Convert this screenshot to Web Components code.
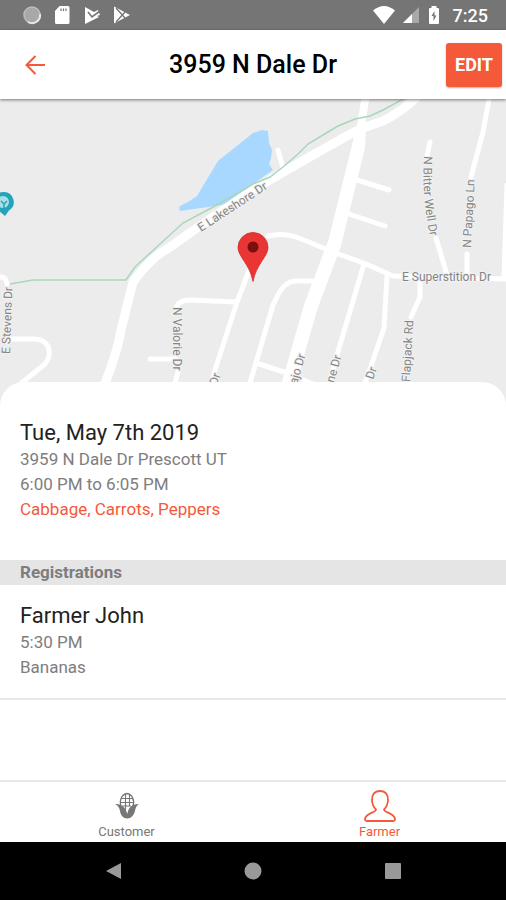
<!DOCTYPE html>
<html lang="en">
<head>
<meta charset="utf-8">
<meta name="viewport" content="width=device-width, initial-scale=1">
<title>3959 N Dale Dr</title>
<style>
  :root {
    --accent: #f4593a;
    --muted: #7d7d7d;
    --line: #e8e8e8;
  }
  html, body { height: 100%; }
  body {
    margin: 0;
    background: #fff;
    color: #222;
    font-family: Roboto, "Liberation Sans", sans-serif;
  }
</style>
</head>
<body>
<market-app>
  <status-bar slot="top" time="7:25"></status-bar>
  <app-header slot="top" action="EDIT">3959 N Dale Dr</app-header>
  <location-map></location-map>
  <market-sheet>
    <info-block>
      <span slot="title">Tue, May 7th 2019</span>
      <span>3959 N Dale Dr Prescott UT</span>
      <span>6:00 PM to 6:05 PM</span>
      <span slot="note">Cabbage, Carrots, Peppers</span>
    </info-block>
    <section-title>Registrations</section-title>
    <info-block divided>
      <span slot="title">Farmer John</span>
      <span>5:30 PM</span>
      <span>Bananas</span>
    </info-block>
  </market-sheet>
  <tab-bar slot="bottom">
    <tab-item icon="corn">Customer</tab-item>
    <tab-item icon="person" active>Farmer</tab-item>
  </tab-bar>
  <system-nav slot="bottom"></system-nav>
</market-app>

<script>
class BaseElement extends HTMLElement {
  constructor() {
    super();
    this.attachShadow({ mode: 'open' });
  }

  connectedCallback() {
    this.shadowRoot.innerHTML = this.template();
  }
}

class MarketApp extends BaseElement {
  template() {
    return `
      <style>
        :host {
          display: flex;
          flex-direction: column;
          min-height: 100vh;
        }
        main { flex: 1; }
      </style>
      <slot name="top"></slot>
      <main><slot></slot></main>
      <slot name="bottom"></slot>
    `;
  }
}

class StatusBar extends BaseElement {
  template() {
    return `
      <style>
        :host {
          display: flex;
          align-items: center;
          justify-content: space-between;
          height: 30px;
          padding: 0 18px 0 22px;
          background: #757575;
          color: #fff;
          font-size: 18px;
          font-weight: 500;
        }
        div { display: flex; align-items: center; }
        .left { gap: 10px; }
        .right { gap: 6px; }
        svg { display: block; }
        time { margin-left: 4px; }
      </style>
      <div class="left">
        <svg width="20" height="20" viewBox="0 0 20 20">
          <circle cx="10" cy="10" r="8" fill="#a8a8a8" stroke="#bcbcbc" stroke-width="1.500"/>
          <path d="M18 9a8 8 0 0 1-12 8" fill="none" stroke="#e6e6e6" stroke-width="2"/>
        </svg>
        <svg width="20" height="20" viewBox="0 0 20 20">
          <path d="M7.500 1H16a1.500 1.500 0 0 1 1.500 1.500v15A1.500 1.500 0 0 1 16 19H4.500A1.500 1.500 0 0 1 3 17.500V6z" fill="#fff"/>
          <path d="M9 3.500v2.500M11.500 3.500v2.500M14 3.500v2.500" stroke="#757575" stroke-width="1.200"/>
        </svg>
        <svg width="20" height="20" viewBox="0 0 20 20">
          <path d="M3 2l9 5 4-2 2 5-3 1 2 1L3 19z" fill="#fff"/>
          <path d="M6 7l4 5 8-6" fill="none" stroke="#757575" stroke-width="1.600"/>
        </svg>
        <svg width="20" height="20" viewBox="0 0 20 20">
          <path d="M2 1.500L18 10 2 18.500z" fill="#fff"/>
          <path d="M4 3l9 10M4 17l9-10" stroke="#757575" stroke-width="1.300"/>
        </svg>
      </div>
      <div class="right">
        <svg width="22" height="20" viewBox="0 0 22 20">
          <path d="M0 5.500Q11-3.500 22 5.500L11 19z" fill="#fff"/>
        </svg>
        <svg width="18" height="20" viewBox="0 0 18 20">
          <path d="M18 2v16H2z" fill="#a9a9a9"/>
          <path d="M11 9v9H2z" fill="#fff"/>
        </svg>
        <svg width="18" height="20" viewBox="0 0 18 20">
          <path d="M6.500 1h5v2H13a1 1 0 0 1 1 1v14a1 1 0 0 1-1 1H5a1 1 0 0 1-1-1V4a1 1 0 0 1 1-1h1.500z" fill="#fff"/>
          <path d="M9.500 6L6.500 11h2v5l3-5.500h-2z" fill="#757575"/>
        </svg>
        <time>${this.getAttribute('time')}</time>
      </div>
    `;
  }
}

class AppHeader extends BaseElement {
  template() {
    return `
      <style>
        :host {
          position: relative;
          z-index: 1;
          display: grid;
          grid-template-columns: 70px 1fr 70px;
          align-items: center;
          height: 69px;
          background: #fff;
          box-shadow: 0 1px 3px rgba(0, 0, 0, .5);
        }
        h1 {
          margin: 0;
          color: #000;
          font-size: 25px;
          font-weight: 500;
          line-height: 32px;
          text-align: center;
        }
        button {
          border: 0;
          padding: 0;
          font: inherit;
          cursor: pointer;
        }
        .back {
          justify-self: center;
          background: none;
          color: var(--accent);
        }
        .back svg { display: block; }
        .edit {
          justify-self: end;
          width: 56px;
          height: 44px;
          margin-right: 4px;
          border-radius: 3px;
          background: var(--accent);
          box-shadow: 0 1px 2px rgba(0, 0, 0, .3);
          color: #fff;
          font-size: 18px;
          font-weight: 700;
        }
      </style>
      <button class="back" aria-label="Back">
        <svg width="20" height="20" viewBox="0 0 20 20" fill="none" stroke="currentColor" stroke-width="2">
          <path d="M20 10H2M10.500 1L1.500 10l9 9"/>
        </svg>
      </button>
      <h1><slot></slot></h1>
      <button class="edit">${this.getAttribute('action')}</button>
    `;
  }
}

class LocationMap extends BaseElement {
  template() {
    return `
      <style>
        :host {
          display: block;
          height: 307px;
          background: #ececec;
        }
        svg { display: block; width: 100%; height: 100%; }
        .road { fill: none; stroke: #fff; stroke-linejoin: round; stroke-linecap: round; }
        text {
          font-size: 12px;
          fill: #858585;
          stroke: #f2f2f2;
          stroke-width: 2;
          paint-order: stroke;
        }
      </style>
      <svg viewBox="0 99 506 307" preserveAspectRatio="xMidYMid slice" role="img" aria-label="Map of 3959 N Dale Dr">
        <!-- lake -->
        <path d="M179 207Q181 205 188 202L197 196 218 161 253 133 262 130 268 131 269 143 272 150 271 158 269 164 273 170 253 184 235 200 222 205 180 211z" fill="#a8d8ff"/>

        <!-- lakeshore drive and the trunk road -->
        <path class="road" stroke-width="9" d="M424 90Q405 110 383 121L360 129 345 137 285 171 253 190 197 228 170 247Q150 258 133 282L121 330Q118 350 104 386"/>
        <path class="road" stroke-width="8" d="M366 94L361 126 360 150"/>
        <path class="road" stroke-width="14" d="M334 245L311 306 288 386"/>
        <path d="M357 125h9l-1 23-24 98h-14z" fill="#fff"/>

        <!-- side streets -->
        <g class="road" stroke-width="5">
          <path d="M278 150L283 168M357 180L389 190M349 214L385 226"/>
          <path d="M268 236Q284 232 299 238L333 252 366 264 393 276 506 279"/>
          <path d="M312 281H295Q285 282 279 293L273 305 252 376 248 390M256 363L290 374 322 388"/>
          <path d="M364 264L337 355 328 388M387 276L384 328 368 375 362 390"/>
          <path d="M420 281V297L411 317M430 142L427 156M436 238L447 275"/>
          <path d="M490 94L483 132 471 177M467 254V275M507 185L504 277"/>
          <path d="M250 268L237 302 215 370 210 390M237 302L190 300Q180 300 177 306M150 359H176M178 372L173 390"/>
          <path d="M0 277Q6 276 7 284M8 339H35C52 340 54 359 40 368L18 386"/>
        </g>

        <!-- creek trail -->
        <path d="M405 98L383 110 370 116 355 119 338 126 323 135 308 144 298 154 283 167 270 177 253 184 215 206 183 223 160 244 135 267 126 280H33L10 284" fill="none" stroke="#aad6bb" stroke-width="1.500"/>

        <path id="lakeshore" d="M201 232L290 174" fill="none"/>
        <path id="bitter" d="M424 156Q421 200 433 250" fill="none"/>
        <text><textPath href="#lakeshore">E Lakeshore Dr</textPath></text>
        <text><textPath href="#bitter">N Bitter Well Dr</textPath></text>
        <text transform="translate(471 248) rotate(-87)">N Papago Ln</text>
        <text transform="translate(173 307) rotate(90)">N Valorie Dr</text>
        <text transform="translate(10 354) rotate(-88)">E Stevens Dr</text>
        <text transform="translate(410 382) rotate(-87)">Flapjack Rd</text>
        <text x="402" y="281">E Superstition Dr</text>
        <text transform="translate(217 386) rotate(-72)">Dr</text>
        <text transform="translate(297 385) rotate(-74)">ajo Dr</text>
        <text transform="translate(333 386) rotate(-74)">ine Dr</text>
        <text transform="translate(373 380) rotate(-70)">Dr</text>

        <!-- park marker -->
        <path d="M4 192a10 10 0 0 1 5 18.500L5 216-1 211A10 10 0 0 1 4 192z" fill="#22a5b8"/>
        <circle cx="3" cy="202" r="6" fill="#a9e0e8"/>
        <path d="M4 209v-6M1 201l3 3 3-3" fill="none" stroke="#22a5b8" stroke-width="1.500"/>

        <!-- market pin -->
        <path d="M253 232.500a15 15 0 0 1 15 15c0 9-12 17-15 34-3-17-15-25-15-34A15 15 0 0 1 253 232.500z" fill="#ea3535" stroke="#d02a2a" stroke-width=".8"/>
        <circle cx="253" cy="247" r="5.500" fill="#7a0f0f"/>
      </svg>
    `;
  }
}

class MarketSheet extends BaseElement {
  template() {
    return `
      <style>
        :host {
          position: relative;
          display: block;
          margin-top: -24px;
          padding-top: 13px;
          border-radius: 24px 24px 0 0;
          background: #fff;
        }
      </style>
      <slot></slot>
    `;
  }
}

class InfoBlock extends BaseElement {
  template() {
    return `
      <style>
        :host {
          display: flex;
          flex-direction: column;
          padding: 24px 20px 38px;
          color: var(--muted);
          font-size: 17px;
          line-height: 25px;
        }
        :host([divided]) {
          padding: 17px 20px 18px;
          border-bottom: 2px solid var(--line);
        }
        h2 {
          margin: 0;
          color: #222;
          font-size: 22px;
          font-weight: 400;
          line-height: 28px;
        }
        .note { color: var(--accent); }
      </style>
      <h2><slot name="title"></slot></h2>
      <slot></slot>
      <div class="note"><slot name="note"></slot></div>
    `;
  }
}

class SectionTitle extends BaseElement {
  template() {
    return `
      <style>
        :host {
          display: block;
          padding: 0 20px;
          background: #e5e5e5;
          color: var(--muted);
          line-height: 25px;
        }
        h3 { margin: 0; font-size: 17px; font-weight: 700; }
      </style>
      <h3><slot></slot></h3>
    `;
  }
}

class TabBar extends BaseElement {
  template() {
    return `
      <style>
        :host {
          display: flex;
          height: 60px;
          border-top: 2px solid var(--line);
          background: #fff;
        }
      </style>
      <slot></slot>
    `;
  }
}

const TAB_ICONS = {
  corn: `
    <path d="M10 18C8 11 11 5 16 4.500c5 .5 8 6.500 6 13.500" fill="none" stroke="currentColor" stroke-width="1.300"/>
    <path d="M14.500 5v16M18.500 6v11M10 9.500h12M9.500 13.500h13M11 17h9" fill="none" stroke="currentColor" stroke-width="1.100"/>
    <path d="M4 15c6 0 10 2.500 12.500 10 .5-6 4-10 11.500-10-2.500 1.500-3.500 4-4 7C23 26 20 29.500 16.500 29.500c-4.500 0-7-3.500-7.500-7.500-.5-3-2-5.500-5-7z" fill="currentColor"/>`,
  person: `
    <path d="M16 2C10.500 2 7.500 6 8 11.500c.3 3.500 1.500 6.500 4 9-.2 3-9.500 3.500-11 9-.3 1.500.5 2.500 2 2.500h26c1.500 0 2.300-1 2-2.500-1.500-5.500-10.800-6-11-9 2.500-2.500 3.700-5.500 4-9C24.500 6 21.500 2 16 2z" fill="none" stroke="currentColor" stroke-width="1.800" stroke-linejoin="round"/>`
};

class TabItem extends BaseElement {
  template() {
    return `
      <style>
        :host {
          display: flex;
          flex: 1;
          color: #777;
        }
        :host([active]) { color: var(--accent); }
        button {
          display: flex;
          flex: 1;
          flex-direction: column;
          align-items: center;
          justify-content: flex-end;
          gap: 1px;
          border: 0;
          padding: 0 0 2px;
          background: none;
          color: inherit;
          font: inherit;
          font-size: 13px;
          line-height: 16px;
          cursor: pointer;
        }
      </style>
      <button>
        <svg width="34" height="34" viewBox="0 0 32 34" aria-hidden="true">${TAB_ICONS[this.getAttribute('icon')]}</svg>
        <slot></slot>
      </button>
    `;
  }
}

class SystemNav extends BaseElement {
  template() {
    return `
      <style>
        :host {
          display: flex;
          justify-content: center;
          align-items: center;
          gap: 120px;
          height: 58px;
          background: #000;
        }
        button { border: 0; padding: 0; background: none; }
        svg { display: block; fill: #999; }
      </style>
      <button aria-label="Back"><svg width="20" height="20" viewBox="0 0 20 20"><path d="M18 2v16L3 10z"/></svg></button>
      <button aria-label="Home"><svg width="20" height="20" viewBox="0 0 20 20"><circle cx="10" cy="10" r="8.500"/></svg></button>
      <button aria-label="Recents"><svg width="20" height="20" viewBox="0 0 20 20"><rect x="2" y="2" width="16" height="16" rx="1"/></svg></button>
    `;
  }
}

customElements.define('market-app', MarketApp);
customElements.define('status-bar', StatusBar);
customElements.define('app-header', AppHeader);
customElements.define('location-map', LocationMap);
customElements.define('market-sheet', MarketSheet);
customElements.define('info-block', InfoBlock);
customElements.define('section-title', SectionTitle);
customElements.define('tab-bar', TabBar);
customElements.define('tab-item', TabItem);
customElements.define('system-nav', SystemNav);
</script>
</body>
</html>
